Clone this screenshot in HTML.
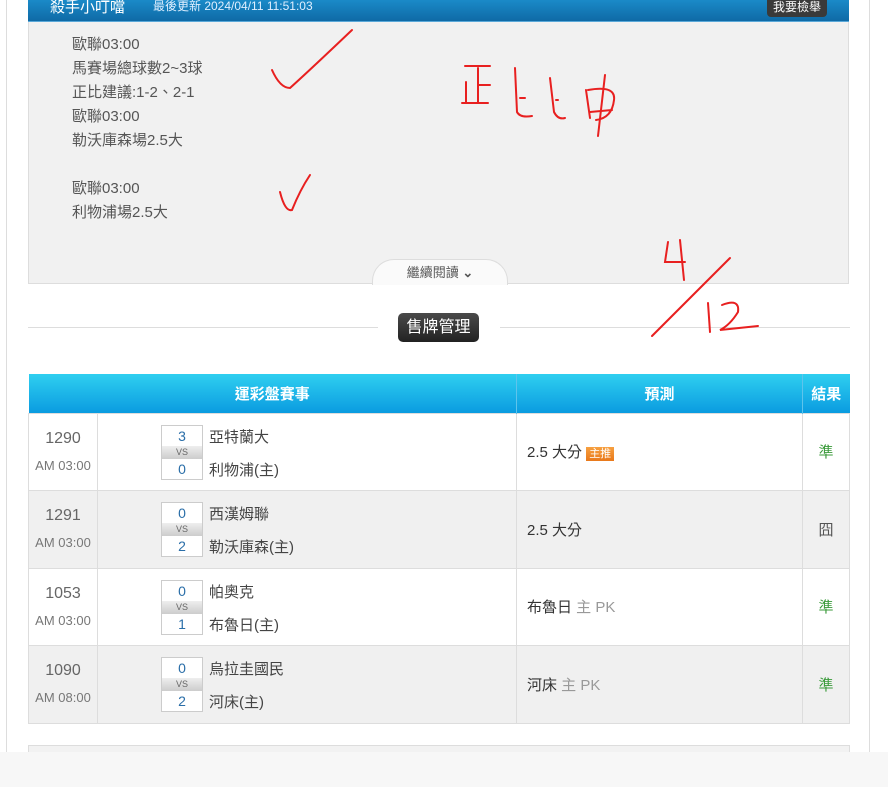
<!DOCTYPE html>
<html><head><meta charset="utf-8"><style>
*{margin:0;padding:0;box-sizing:border-box}
body{width:888px;height:787px;overflow:hidden;background:#fff;font-family:"Liberation Sans","Noto Sans CJK TC",sans-serif;position:relative}
.frame{position:absolute;left:6px;top:0;width:864px;height:752px;border-left:1px solid #ddd;border-right:1px solid #ddd;background:#fff}
.hdr{position:absolute;left:28px;top:0;width:821px;height:22px;background:linear-gradient(#1a8ac8,#0f6aa6);border-bottom:1px solid #5aa8d8}
.hdr .t{position:absolute;left:22px;top:-4px;color:#fff;font-size:15px}
.hdr .u{position:absolute;left:125px;top:-3px;color:#dfefff;font-size:12px}
.hdr .b{position:absolute;right:22px;top:-4px;background:#3a3a3a;color:#fff;font-size:12px;padding:2px 6px;border-radius:4px}
.box{position:absolute;left:28px;top:22px;width:821px;height:262px;background:#f1f1f1;border:1px solid #ddd;border-top:none}
.txt{position:absolute;left:72px;top:33px;color:#555;font-size:15px;line-height:24px}
.more{position:absolute;left:372px;top:259px;width:136px;height:26px;background:#fafafa;border:1px solid #ddd;border-bottom:none;border-radius:22px 22px 0 0;text-align:center;font-size:13px;color:#555;line-height:26px}
.line{position:absolute;top:327px;height:1px;background:#ddd}
.sale{position:absolute;left:398px;top:313px;width:81px;height:29px;background:linear-gradient(#4a4a4a,#222);border-radius:5px;color:#fff;font-size:16px;text-align:center;line-height:29px}
table{position:absolute;left:28px;top:374px;width:822px;border-collapse:collapse;font-size:15px}
th{height:39px;background:linear-gradient(#2fcff0,#0a9be0);color:#fff;font-weight:bold;font-size:15px;border-right:1px solid #5ec4ec}
td{height:77.5px;border:1px solid #ddd;color:#333}
tr.g td{background:#f0f0f0}
.id{width:69px;text-align:center;color:#666;font-size:16px;line-height:27px}
.id small{font-size:13px;color:#777;display:block}
.m{width:419px;position:relative}
.sc{position:absolute;left:63px;top:11px;width:42px;border:1px solid #ccc;background:#fff;text-align:center;font-size:14px;color:#2a6ea8}
.sc div{height:20px;line-height:20px}
.sc .vs{height:13px;line-height:13px;font-size:9px;background:linear-gradient(#eee,#ccc);color:#666}
.n1{position:absolute;left:111px;top:12px;color:#444}
.n2{position:absolute;left:111px;top:45px;color:#444}
.p{width:286px;padding-left:10px}
.r{text-align:center;color:#3a9a3a}
.tag{background:linear-gradient(#f7a040,#e9781a);color:#fff;font-size:11px;padding:1px 3px}
.gr{color:#999}
.bot{position:absolute;left:28px;top:745px;width:822px;height:10px;background:#f2f2f2;border:1px solid #ddd}
.foot{position:absolute;left:0;top:752px;width:888px;height:35px;background:#f7f7f7}
</style></head><body>
<div class="frame"></div>
<div class="hdr"><span class="t">殺手小叮噹</span><span class="u">最後更新 2024/04/11 11:51:03</span><span class="b">我要檢舉</span></div>
<div class="box"></div>
<div class="txt">歐聯03:00<br>馬賽場總球數2~3球<br>正比建議:1-2、2-1<br>歐聯03:00<br>勒沃庫森場2.5大<br><br>歐聯03:00<br>利物浦場2.5大</div>
<div class="more">繼續閱讀 <b>⌄</b></div>
<div class="line" style="left:28px;width:350px"></div>
<div class="line" style="left:500px;width:350px"></div>
<div class="sale">售牌管理</div>
<table>
<tr><th colspan="2" style="width:488px">運彩盤賽事</th><th>預測</th><th style="border-right:none">結果</th></tr>
<tr><td class="id">1290<small>AM 03:00</small></td><td class="m"><div class="sc"><div>3</div><div class="vs">VS</div><div>0</div></div><span class="n1">亞特蘭大</span><span class="n2">利物浦(主)</span></td><td class="p">2.5 大分 <span class="tag">主推</span></td><td class="r">準</td></tr>
<tr class="g"><td class="id">1291<small>AM 03:00</small></td><td class="m"><div class="sc"><div>0</div><div class="vs">VS</div><div>2</div></div><span class="n1">西漢姆聯</span><span class="n2">勒沃庫森(主)</span></td><td class="p">2.5 大分</td><td class="r" style="color:#555">囧</td></tr>
<tr><td class="id">1053<small>AM 03:00</small></td><td class="m"><div class="sc"><div>0</div><div class="vs">VS</div><div>1</div></div><span class="n1">帕奧克</span><span class="n2">布魯日(主)</span></td><td class="p">布魯日 <span class="gr">主 PK</span></td><td class="r">準</td></tr>
<tr class="g"><td class="id">1090<small>AM 08:00</small></td><td class="m"><div class="sc"><div>0</div><div class="vs">VS</div><div>2</div></div><span class="n1">烏拉圭國民</span><span class="n2">河床(主)</span></td><td class="p">河床 <span class="gr">主 PK</span></td><td class="r">準</td></tr>
</table>
<div class="bot"></div>
<div class="foot"></div>
<svg style="position:absolute;left:0;top:0" width="888" height="787" fill="none" stroke="#e82020" stroke-width="2" stroke-linecap="round">
<path d="M272 70 Q280 88 290 88 Q310 70 352 30"/>
<path d="M280 192 Q285 212 292 210 Q300 190 310 175"/>
<path d="M462 103 L488 103 M478 68 L478 103 M466 82 L466 103 M478 85 L490 85 M465 66 L490 66"/>
<path d="M515 68 L517 112 Q520 118 532 116 M520 98 L525 98"/>
<path d="M550 78 L554 112 Q558 120 565 118 M556 100 L558 100"/>
<path d="M586 90 L590 118 M588 90 Q616 85 614 100 Q612 118 596 120 M605 75 L598 136 M590 112 L612 110"/>
<path d="M668 242 L665 262 L685 262 M680 240 L684 280"/>
<path d="M730 258 L652 336"/>
<path d="M708 303 L710 332"/>
<path d="M722 305 Q740 298 738 312 Q730 325 720 330 L758 326"/>
</svg>
</body></html>
